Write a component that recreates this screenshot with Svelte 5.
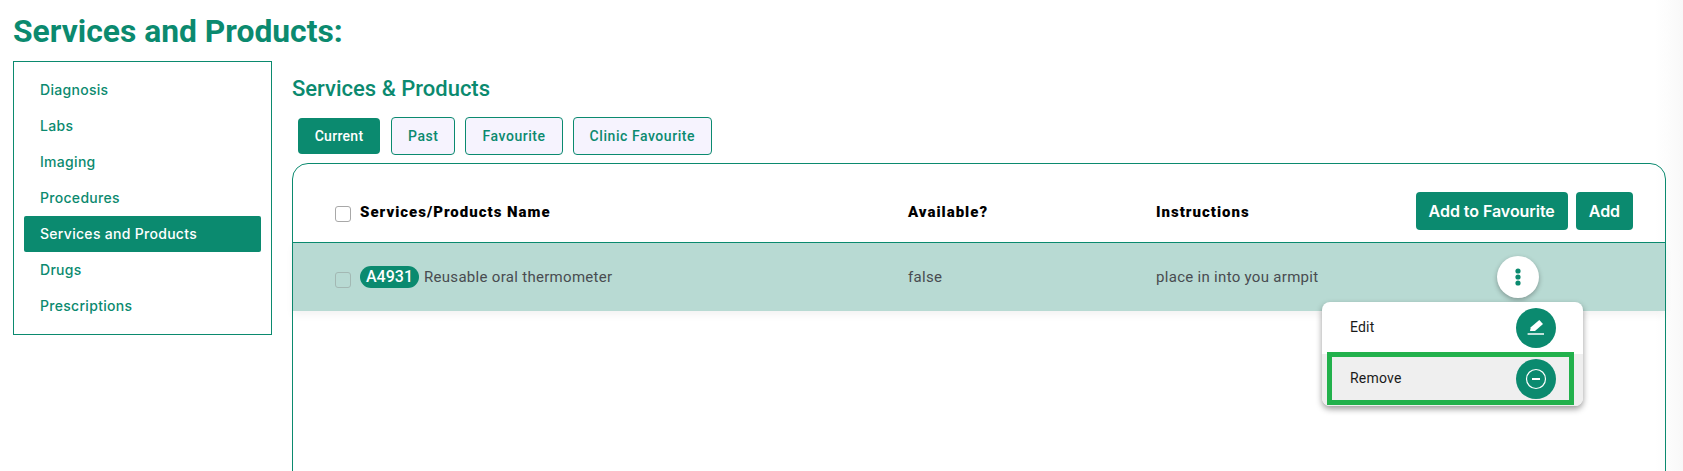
<script>
  const navItems = ['Diagnosis', 'Labs', 'Imaging', 'Procedures', 'Services and Products', 'Drugs', 'Prescriptions'];
  const tabs = ['Current', 'Past', 'Favourite', 'Clinic Favourite'];
  let activeNav = 'Services and Products';
  let activeTab = 'Current';
</script>

<div class="page">
  <h1 class="title">Services and Products:</h1>

  <div class="layout">
    <nav class="side">
      {#each navItems as item}
        <div class="side-item" class:active={item === activeNav}>{item}</div>
      {/each}
    </nav>

    <main class="content">
      <h2 class="subtitle">Services &amp; Products</h2>

      <div class="tabs">
        {#each tabs as tab}
          <button class="tab" class:current={tab === activeTab}>{tab}</button>
        {/each}
      </div>

      <section class="card">
        <div class="row head">
          <div class="cell-name">
            <span class="check"></span>
            <span class="head-text">Services/Products Name</span>
          </div>
          <div class="head-text">Available?</div>
          <div class="head-text">Instructions</div>
          <div class="actions">
            <button class="action">Add to Favourite</button>
            <button class="action">Add</button>
          </div>
        </div>

        <div class="row item">
          <div class="cell-name">
            <span class="check muted"></span>
            <span class="badge">A4931</span>
            <span>Reusable oral thermometer</span>
          </div>
          <div>false</div>
          <div>place in into you armpit</div>
          <div class="kebab-cell">
            <button class="kebab" aria-label="More">
              <svg width="6" height="18" viewBox="0 0 6 18"><circle cx="3" cy="3" r="2.6" /><circle cx="3" cy="9" r="2.6" /><circle cx="3" cy="15" r="2.6" /></svg>
            </button>
          </div>
        </div>

        <div class="menu">
          <div class="menu-item">
            <span class="menu-label">Edit</span>
            <span class="menu-icon">
              <svg width="20" height="20" viewBox="0 0 20 20" fill="none">
                <path d="M4 13 L4.8 9.3 L13.3 2 L17 6 L9 13 Z" fill="#fff" />
                <path d="M1.6 16 H18" stroke="#fff" stroke-width="1.5" />
              </svg>
            </span>
          </div>
          <div class="menu-item hover">
            <span class="menu-label">Remove</span>
            <span class="menu-icon">
              <svg width="22" height="22" viewBox="0 0 22 22" fill="none">
                <circle cx="11" cy="11" r="9.5" stroke="#fff" stroke-width="1.2" />
                <path d="M7 11 H15" stroke="#fff" stroke-width="2" />
              </svg>
            </span>
          </div>
          <div class="highlight"></div>
        </div>
      </section>
    </main>
  </div>
</div>

<style>
  :global(body) {
    margin: 0;
    background: linear-gradient(to right, #fff 1655px, #fafafa 1677px, #f8f8f8);
    overflow: hidden;
  }

  .page {
    height: 471px;
    padding: 0 17px 0 13px;
    box-sizing: border-box;
    font-family: Roboto, sans-serif;
    overflow: hidden;
  }

  .title {
    margin: 0;
    height: 61px;
    line-height: 62px;
    font-size: 31.8px;
    font-weight: 700;
    color: #0b8a6f;
  }

  .layout {
    display: flex;
    gap: 20px;
    align-items: flex-start;
  }

  .side {
    width: 259px;
    height: 274px;
    padding: 10px;
    box-sizing: border-box;
    border: 1px solid #0b8a6f;
    display: flex;
    flex-direction: column;
    flex-shrink: 0;
  }

  .side-item {
    height: 36px;
    line-height: 36px;
    padding-left: 16px;
    font-family: Inter, sans-serif;
    font-size: 14px;
    font-weight: 500;
    letter-spacing: 0.3px;
    color: #0b8a6f;
    border-radius: 2px;
  }

  .side-item.active {
    background: #0b8a6f;
    color: #fff;
  }

  .content {
    flex: 1;
    min-width: 0;
  }

  .subtitle {
    margin: 13px 0 0;
    height: 30px;
    line-height: 30px;
    font-size: 22px;
    font-weight: 500;
    color: #0b8a6f;
  }

  .tabs {
    display: flex;
    align-items: center;
    gap: 10px;
    margin: 13px 0 8px 6px;
    height: 38px;
  }

  .tab {
    height: 38px;
    padding: 0 16px;
    font-family: Roboto, sans-serif;
    font-size: 14px;
    font-weight: 500;
    letter-spacing: 0.55px;
    color: #0b8a6f;
    background: #f6f3fe;
    border: 1px solid #0b8a6f;
    border-radius: 4px;
  }

  .tab.current {
    height: 36px;
    width: 82px;
    padding: 0;
    margin-right: 1px;
    letter-spacing: 0.3px;
    background: #0b8a6f;
    color: #fff;
    border: 0;
  }

  .card {
    position: relative;
    height: 400px;
    border: 1px solid #0b8a6f;
    border-radius: 16px;
  }

  .row {
    display: grid;
    grid-template-columns: 573px 248px 1fr auto;
    align-items: center;
    padding: 0 32px 0 42px;
  }

  .head {
    height: 62px;
    padding-top: 16px;
    border-bottom: 1px solid #0b8a6f;
  }

  .head-text {
    font-size: 15px;
    font-weight: 900;
    letter-spacing: 1px;
    color: #000;
    position: relative;
    top: 1px;
  }

  .cell-name {
    display: flex;
    align-items: center;
  }

  .check {
    width: 14px;
    height: 14px;
    margin-right: 9px;
    border: 1px solid #a8a8a8;
    border-radius: 3px;
    background: #fff;
    flex-shrink: 0;
    position: relative;
    top: 3px;
  }

  .check.muted {
    background: transparent;
    border-color: #a3b8b3;
  }

  .actions {
    display: flex;
    gap: 8px;
  }

  .action {
    height: 38px;
    padding: 0 13px;
    font-family: Inter, sans-serif;
    font-size: 16px;
    font-weight: 600;
    letter-spacing: -0.05px;
    color: #fff;
    background: #0b8a6f;
    border: 0;
    border-radius: 4px;
  }

  .item {
    height: 68px;
    background: #b8dad3;
    font-size: 15px;
    letter-spacing: 0.3px;
    color: #484c50;
    box-shadow: 0 4px 8px rgba(0, 0, 0, 0.05);
  }

  .badge {
    height: 22px;
    line-height: 22px;
    width: 59px;
    margin-right: 5px;
    text-align: center;
    font-size: 16px;
    font-weight: 500;
    letter-spacing: 0;
    color: #fff;
    background: #0b8a6f;
    border-radius: 11px;
  }

  .kebab-cell {
    width: 217px;
    display: flex;
    justify-content: flex-end;
    padding-right: 94px;
    box-sizing: border-box;
  }

  .kebab {
    width: 42px;
    height: 42px;
    padding: 0;
    border: 0;
    border-radius: 50%;
    background: #fff;
    display: flex;
    align-items: center;
    justify-content: center;
    box-shadow: 0 2px 5px rgba(0, 0, 0, 0.3);
  }

  .kebab svg {
    fill: #0b8a6f;
  }

  .menu {
    position: absolute;
    left: 1029px;
    top: 138px;
    width: 261px;
    background: #fff;
    border-radius: 8px;
    box-shadow: 0 3px 6px rgba(0, 0, 0, 0.4);
  }

  .menu-item {
    height: 52px;
    display: flex;
    align-items: center;
    justify-content: space-between;
    padding: 0 27px 0 28px;
    font-size: 14px;
    letter-spacing: 0.2px;
    color: #1a1a1a;
  }

  .menu-item.hover {
    box-sizing: border-box;
    padding-bottom: 2px;
    background: #efefef;
    border-radius: 0 0 8px 8px;
  }

  .menu-label {
    margin-bottom: 3px;
  }

  .menu-icon {
    width: 40px;
    height: 40px;
    border-radius: 50%;
    background: #0b8a6f;
    display: flex;
    align-items: center;
    justify-content: center;
  }

  .highlight {
    position: absolute;
    left: 5px;
    top: 50px;
    width: 247px;
    height: 53px;
    box-sizing: border-box;
    border: 5px solid #22b14c;
    pointer-events: none;
  }
</style>
